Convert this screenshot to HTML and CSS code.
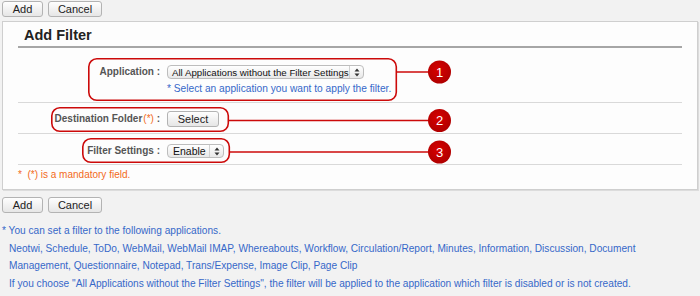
FILE: index.html
```html
<!DOCTYPE html>
<html lang="en">
<head>
    <meta charset="UTF-8">
    <title>Add Filter</title>
    <link rel="stylesheet" href="styles.css">
</head>
<body>
    <div class="toolbar">
        <button class="btn btn-add">Add</button>
        <button class="btn btn-cancel">Cancel</button>
    </div>

    <div class="panel">
        <h2 class="panel-title">Add Filter</h2>

        <div class="form-row row-app">
            <div class="label">Application :</div>
            <div class="value">
                <div class="select select-app">
                    <span class="select-text">All Applications without the Filter Settings</span>
                    <span class="select-arrow">
                        <svg width="6" height="9" viewBox="0 0 6 9"><path d="M3 0.5 L5.5 3.5 H0.5 Z M3 8.5 L5.5 5.5 H0.5 Z" fill="#333"/></svg>
                    </span>
                </div>
                <p class="hint">* Select an application you want to apply the filter.</p>
            </div>
        </div>

        <div class="form-row row-folder">
            <div class="label">Destination Folder<span class="req">(*)</span> :</div>
            <div class="value">
                <button class="btn btn-select">Select</button>
            </div>
        </div>

        <div class="form-row row-settings">
            <div class="label">Filter Settings :</div>
            <div class="value">
                <div class="select select-enable">
                    <span class="select-text">Enable</span>
                    <span class="select-arrow">
                        <svg width="6" height="9" viewBox="0 0 6 9"><path d="M3 0.5 L5.5 3.5 H0.5 Z M3 8.5 L5.5 5.5 H0.5 Z" fill="#333"/></svg>
                    </span>
                </div>
            </div>
        </div>

        <p class="mandatory">* &nbsp;(*) is a mandatory field.</p>
    </div>

    <div class="toolbar toolbar-bottom">
        <button class="btn btn-add">Add</button>
        <button class="btn btn-cancel">Cancel</button>
    </div>

    <div class="notes">
        <p class="note-head">* You can set a filter to the following applications.</p>
        <p class="note">Neotwi, Schedule, ToDo, WebMail, WebMail IMAP, Whereabouts, Workflow, Circulation/Report, Minutes, Information, Discussion, Document Management, Questionnaire, Notepad, Trans/Expense, Image Clip, Page Clip</p>
        <p class="note">If you choose "All Applications without the Filter Settings", the filter will be applied to the application which filter is disabled or is not created.</p>
    </div>

    <!-- callout annotations drawn over the form -->
    <svg class="callouts" width="700" height="296" viewBox="0 0 700 296">
        <defs>
            <radialGradient id="dot" cx="45%" cy="40%" r="60%">
                <stop offset="0%" stop-color="#d80000"/>
                <stop offset="100%" stop-color="#b00000"/>
            </radialGradient>
        </defs>
        <g fill="none" stroke="#cc0a0a" stroke-width="1.6">
            <rect x="88.8" y="58.8" width="307.5" height="41.5" rx="8"/>
            <rect x="51.8" y="107.8" width="176.5" height="23.5" rx="8"/>
            <rect x="82.8" y="138.8" width="146.5" height="23.5" rx="8"/>
            <line x1="396.5" y1="72" x2="430" y2="72"/>
            <line x1="228.5" y1="120.5" x2="430" y2="120.5"/>
            <line x1="229.5" y1="152" x2="430" y2="152"/>
        </g>
        <g fill="url(#dot)">
            <circle cx="439.5" cy="72" r="11.5"/>
            <circle cx="439.5" cy="120.5" r="11.5"/>
            <circle cx="439.5" cy="152" r="11.5"/>
        </g>
        <g class="callout-num" fill="#fff" text-anchor="middle">
            <text x="439.5" y="76.5">1</text>
            <text x="439.5" y="125">2</text>
            <text x="439.5" y="156.5">3</text>
        </g>
    </svg>
</body>
</html>
```

FILE: styles.css
```css
body {
    font-family: "Liberation Sans", Arial, sans-serif;
    font-size: 10px;
    background-color: #f2f2f2;
    color: #333;
    margin: 0;
    padding: 0;
    position: relative;
    width: 700px;
    height: 296px;
    overflow: hidden;
}
p {
    margin: 0;
}
.toolbar {
    display: flex;
    gap: 5px;
    padding: 1px 2px 0;
    height: 16px;
}
.toolbar-bottom {
    margin-top: 6px;
}
.btn {
    font-family: "Liberation Sans", Arial, sans-serif;
    font-size: 11px;
    color: #222;
    height: 16px;
    padding: 0;
    border: 1px solid #b3b3b3;
    border-radius: 3px;
    background: linear-gradient(#fefefe, #e6e6e6);
    line-height: 14px;
}
.btn-add {
    width: 41px;
}
.btn-cancel {
    width: 54px;
}
.panel {
    margin: 4px 2px 0;
    background-color: #fdfdfd;
    border: 1px solid #cfcfcf;
    box-shadow: 1px 1px 0 #dcdcdc;
    padding: 0 15px;
}
.panel-title {
    margin: 0;
    height: 24px;
    padding-left: 6px;
    font-size: 14.5px;
    line-height: 26px;
    color: #222;
    border-bottom: 2px solid #a6a6a6;
}
.form-row {
    display: grid;
    grid-template-columns: 142px 1fr;
    column-gap: 7px;
    border-bottom: 1px solid #d9d9d9;
}
.row-app {
    height: 55px;
    padding-top: 17px;
    box-sizing: border-box;
}
.row-folder {
    height: 31px;
    padding-top: 8px;
    box-sizing: border-box;
}
.row-settings {
    height: 31px;
    padding-top: 10px;
    box-sizing: border-box;
}
.label {
    text-align: right;
    font-weight: bold;
    color: #555;
    line-height: 14px;
    font-size: 10px;
}
.row-folder .label {
    line-height: 16px;
}
.req {
    color: #f26a1b;
    font-weight: normal;
    margin-left: 1px;
}
.value {
    display: flex;
    flex-direction: column;
    align-items: flex-start;
}
.select {
    display: flex;
    align-items: center;
    height: 14px;
    box-sizing: border-box;
    border: 1px solid #bdbdbd;
    border-radius: 4px;
    background: linear-gradient(#ffffff, #e8e8e8);
    font-size: 10px;
    color: #111;
}
.select-app {
    width: 197px;
    font-size: 9.7px;
}
.select-enable {
    width: 57px;
    font-size: 10.5px;
}
.select-text {
    flex: 1;
    padding-left: 5px;
    white-space: nowrap;
    overflow: hidden;
}
.select-app .select-text {
    padding-left: 4px;
}
.select-arrow {
    display: flex;
    align-items: center;
    justify-content: center;
    flex: none;
    width: 13px;
    height: 100%;
    border-left: 1px solid #d0d0d0;
}
.hint {
    margin-top: 3px;
    color: #3668c9;
    line-height: 14px;
    font-size: 10.2px;
}
.btn-select {
    width: 52px;
}
.mandatory {
    color: #f26a1b;
    padding: 3px 0 7px;
    line-height: 14px;
}
.notes {
    margin-top: 9px;
    padding: 0 10px 0 2px;
    color: #3668c9;
    font-size: 10.15px;
    line-height: 17.5px;
}
.note {
    padding-left: 7px;
}
.callouts {
    position: absolute;
    left: 0;
    top: 0;
    pointer-events: none;
}
.callout-num {
    font-family: "Liberation Sans", Arial, sans-serif;
    font-size: 13px;
}
```
